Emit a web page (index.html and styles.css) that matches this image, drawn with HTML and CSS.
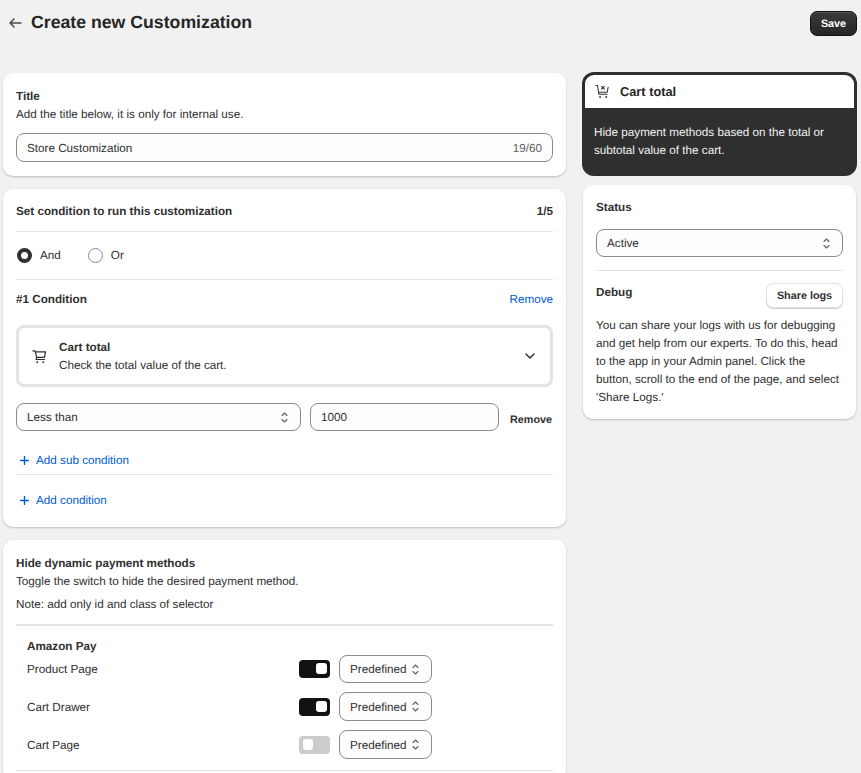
FILE: index.html
```html
<!DOCTYPE html>
<html lang="en">
<head>
<meta charset="utf-8">
<title>Create new Customization</title>
<link rel="stylesheet" href="styles.css">
</head>
<body>
<div class="page">
  <header class="topbar">
    <div class="title-wrap">
      <svg class="back" viewBox="0 0 14 12" width="14" height="12" aria-hidden="true"><path d="M13 6H2M6 2 2 6l4 4" fill="none" stroke="#4a4a4a" stroke-width="1.5" stroke-linecap="round" stroke-linejoin="round"/></svg>
      <h1>Create new Customization</h1>
    </div>
    <button class="save">Save</button>
  </header>
  <div class="columns">
    <main class="main">
      <section class="card card-title">
        <h2>Title</h2>
        <p class="sub">Add the title below, it is only for internal use.</p>
        <div class="field field-title"><span>Store Customization</span><span class="count">19/60</span></div>
      </section>

      <section class="card card-cond">
        <div class="row-between cond-head"><h2>Set condition to run this customization</h2><strong class="ratio">1/5</strong></div>
        <div class="radios">
          <label class="radio"><span class="dot on"></span>And</label>
          <label class="radio"><span class="dot"></span>Or</label>
        </div>
        <div class="row-between cond-num"><h2>#1 Condition</h2><a class="link">Remove</a></div>
        <div class="picker">
          <svg class="cart" viewBox="0 0 16 16" width="15" height="15" aria-hidden="true"><path d="M1 2h2l.6 1M3.6 3H14.5l-1.3 6H5L3.6 3ZM5 9l-.6 2.2h9" fill="none" stroke="#303030" stroke-width="1.3" stroke-linecap="round" stroke-linejoin="round"/><circle cx="5.6" cy="14" r="1" fill="#303030"/><circle cx="12" cy="14" r="1" fill="#303030"/></svg>
          <div class="picker-text"><h2>Cart total</h2><p class="sub">Check the total value of the cart.</p></div>
          <svg class="chev" viewBox="0 0 10 6" width="10" height="6" aria-hidden="true"><path d="M1 1l4 4 4-4" fill="none" stroke="#303030" stroke-width="1.5" stroke-linecap="round" stroke-linejoin="round"/></svg>
        </div>
        <div class="rule-row">
          <div class="field select-less"><span>Less than</span><svg class="updown" viewBox="0 0 7 11" width="7" height="11" aria-hidden="true"><path d="M1 3.5 3.5 1 6 3.5M1 7.5 3.5 10 6 7.5" fill="none" stroke="#616161" stroke-width="1.1" stroke-linecap="round" stroke-linejoin="round"/></svg></div>
          <div class="field value"><span>1000</span></div>
          <span class="remove-bold">Remove</span>
        </div>
        <a class="link add add-sub"><svg viewBox="0 0 9 9" width="9" height="9" aria-hidden="true"><path d="M4.5.5v8M.5 4.5h8" stroke="#005bd3" stroke-width="1.4" stroke-linecap="round"/></svg>Add sub condition</a>
        <a class="link add add-cond"><svg viewBox="0 0 9 9" width="9" height="9" aria-hidden="true"><path d="M4.5.5v8M.5 4.5h8" stroke="#005bd3" stroke-width="1.4" stroke-linecap="round"/></svg>Add condition</a>
      </section>

      <section class="card card-hide">
        <h2>Hide dynamic payment methods</h2>
        <p class="sub">Toggle the switch to hide the desired payment method.</p>
        <p class="sub note">Note: add only id and class of selector</p>
        <div class="method">
          <h2>Amazon Pay</h2>
          <div class="method-row r1"><span class="mlabel">Product Page</span><span class="toggle on"></span><div class="field mini short"><span>Predefined</span><svg class="updown" viewBox="0 0 7 11" width="7" height="11" aria-hidden="true"><path d="M1 3.5 3.5 1 6 3.5M1 7.5 3.5 10 6 7.5" fill="none" stroke="#616161" stroke-width="1.1" stroke-linecap="round" stroke-linejoin="round"/></svg></div></div>
          <div class="method-row"><span class="mlabel">Cart Drawer</span><span class="toggle on"></span><div class="field mini"><span>Predefined</span><svg class="updown" viewBox="0 0 7 11" width="7" height="11" aria-hidden="true"><path d="M1 3.5 3.5 1 6 3.5M1 7.5 3.5 10 6 7.5" fill="none" stroke="#616161" stroke-width="1.1" stroke-linecap="round" stroke-linejoin="round"/></svg></div></div>
          <div class="method-row"><span class="mlabel">Cart Page</span><span class="toggle"></span><div class="field mini"><span>Predefined</span><svg class="updown" viewBox="0 0 7 11" width="7" height="11" aria-hidden="true"><path d="M1 3.5 3.5 1 6 3.5M1 7.5 3.5 10 6 7.5" fill="none" stroke="#616161" stroke-width="1.1" stroke-linecap="round" stroke-linejoin="round"/></svg></div></div>
        </div>
        <div class="method-end"></div>
      </section>
    </main>

    <aside class="side">
      <section class="info">
        <div class="info-head">
          <svg viewBox="0 0 16 16" width="15" height="15" aria-hidden="true"><path d="M1 1.5h1.6l1.5 9.5h8.8M14 3.5l-1 5.2H4" fill="none" stroke="#303030" stroke-width="1.1" stroke-linecap="round" stroke-linejoin="round"/><path d="M7 2.5l3 3M10 2.5l-3 3" stroke="#303030" stroke-width="1.1" stroke-linecap="round"/><circle cx="5.4" cy="13.8" r="1" fill="#303030"/><circle cx="12" cy="13.8" r="1" fill="#303030"/></svg>
          <h3>Cart total</h3>
        </div>
        <p>Hide payment methods based on the total or subtotal value of the cart.</p>
      </section>
      <section class="card card-status">
        <h2>Status</h2>
        <div class="field status"><span>Active</span><svg class="updown" viewBox="0 0 7 11" width="7" height="11" aria-hidden="true"><path d="M1 3.5 3.5 1 6 3.5M1 7.5 3.5 10 6 7.5" fill="none" stroke="#616161" stroke-width="1.1" stroke-linecap="round" stroke-linejoin="round"/></svg></div>
        <div class="row-between debug"><h2>Debug</h2><button class="share">Share logs</button></div>
        <p class="sub debug-text">You can share your logs with us for debugging and get help from our experts. To do this, head to the app in your Admin panel. Click the button, scroll to the end of the page, and select 'Share Logs.'</p>
      </section>
    </aside>
  </div>
</div>
</body>
</html>
```
FILE: styles.css
```css
* { box-sizing: border-box; }
html, body { margin: 0; height: 773px; overflow: hidden; }
body { background: #f1f1f1; color: #303030; font: 11.7px/18px "Liberation Sans", Arial, sans-serif; text-rendering: geometricPrecision; }
h1, h2, h3, p { margin: 0; }
.page { padding: 0 4px 0 3px; }
.topbar { display: flex; justify-content: space-between; height: 73px; }
.title-wrap { display: flex; align-items: center; height: 44px; padding-left: 5px; gap: 9px; }
.back { flex: none; margin-top: 1px; }
h1 { font-size: 17.7px; line-height: 24px; font-weight: 700; color: #262626; }
.save { margin-top: 11px; width: 47px; height: 25px; padding: 0; border: 1px solid #111; border-radius: 7px; background: linear-gradient(#3a3a3a, #262626); color: #fff; font: 700 10.8px "Liberation Sans", Arial, sans-serif; text-rendering: geometricPrecision; box-shadow: inset 0 1px 0 #555; }
.columns { display: flex; gap: 16px; align-items: flex-start; }
.main { width: 563px; flex: none; display: flex; flex-direction: column; gap: 13px; }
.side { width: 275px; flex: none; display: flex; flex-direction: column; gap: 9px; margin-top: -1px; }
.card { background: #fff; border-radius: 10px; box-shadow: 0 1px 2px rgba(0,0,0,.22); padding: 15px 13px; }
h2 { font-size: 11.7px; line-height: 18px; font-weight: 700; color: #303030; }
.sub { color: #303030; }
.row-between { display: flex; justify-content: space-between; align-items: center; }
.field { display: flex; align-items: center; justify-content: space-between; background: #fdfdfd; border: 1px solid #8a8a8a; border-radius: 8px; padding: 2px 10px 0; }
.field > .updown { margin: -2px 2px 0 0; flex: none; }
.field-title { height: 29px; margin-top: 9px; }
.count { color: #616161; }
.card-title { height: 103px; }
.card-cond { height: 338px; padding-top: 13px; }
.cond-head { height: 30px; padding: 1px 0 10px; border-bottom: 1px solid #e3e3e3; }
.radios { display: flex; gap: 27px; height: 48px; align-items: center; border-bottom: 1px solid #e3e3e3; padding-left: 1px; }
.radio { display: flex; align-items: center; gap: 8px; }
.dot { width: 15px; height: 15px; border-radius: 50%; border: 1px solid #8a8a8a; background: #fff; }
.dot.on { border: 4px solid #303030; }
.cond-num { height: 39px; }
.link { color: #005bd3; }
.picker { display: flex; align-items: center; height: 62px; margin-top: 6px; border: 3px solid #e3e3e3; border-radius: 8px; padding: 0 13px; gap: 12px; }
.picker .cart { flex: none; }
.picker-text { flex: 1; padding-top: 2px; }
.chev { flex: none; margin-right: 2px; }
.rule-row { display: flex; align-items: center; height: 28px; margin-top: 16px; gap: 9px; }
.select-less { width: 285px; height: 28px; }
.value { width: 189px; height: 28px; justify-content: flex-start; }
.remove-bold { font-weight: 700; font-size: 10.8px; margin: 6px 0 0 2px; white-space: nowrap; }
.add { display: flex; align-items: center; gap: 7px; padding: 2px 0 0 4px; }
.add svg { margin-top: -2px; flex: none; }
.add-sub { height: 28px; margin-top: 15px; }
.add-cond { height: 51px; border-top: 1px solid #e3e3e3; }
.card-hide { height: 240px; }
.note { margin-top: 5px; }
.method { margin-top: 10px; border-top: 2px solid #e3e3e3; padding: 12px 11px 0; }
.method-row { display: flex; align-items: center; height: 38px; }
.r1 { margin-top: -6px; }
.mlabel { width: 272px; padding-top: 2px; }
.toggle { width: 31px; height: 18px; border-radius: 4px; background: #cccccc; position: relative; margin-right: 9px; }
.toggle::after { content: ""; position: absolute; top: 3px; left: 4px; width: 10px; height: 11px; border-radius: 3px; background: #fff; }
.toggle.on { background: #121212; }
.toggle.on::after { left: 17px; top: 3px; width: 11px; height: 11px; }
.mini { width: 93px; height: 29px; margin-top: -1px; border-radius: 8px; }
.mini.short { height: 28px; margin-top: 0; }
.method-end { height: 1px; background: #e3e3e3; margin-top: 6px; }
.info { height: 104px; background: #2f2f2f; border-radius: 12px; overflow: hidden; padding: 3px 3px 0; }
.info-head { display: flex; align-items: center; height: 33px; gap: 10px; padding-left: 10px; background: #fff; border-radius: 9px 9px 0 0; }
h3 { font-size: 12.8px; font-weight: 700; color: #262626; }
.info p { color: #f1f1f1; padding: 16px 9px 0; }
.card-status { height: 234px; padding-top: 14px; margin: 0 1px; }
.status { height: 28px; margin-top: 12px; }
.debug { margin-top: 13px; border-top: 1px solid #e3e3e3; padding-top: 13px; }
.debug h2 { align-self: flex-start; }
.share { width: 75px; height: 23px; margin: 0 1px; padding: 0; background: #fff; border: 0; border-radius: 6px; box-shadow: 0 0 0 1px #e3e3e3, 0 1px 1px 1px rgba(0,0,0,.2); font: 700 10.8px "Liberation Sans", Arial, sans-serif; text-rendering: geometricPrecision; color: #303030; }
.debug-text { margin-top: 10px; }
```
